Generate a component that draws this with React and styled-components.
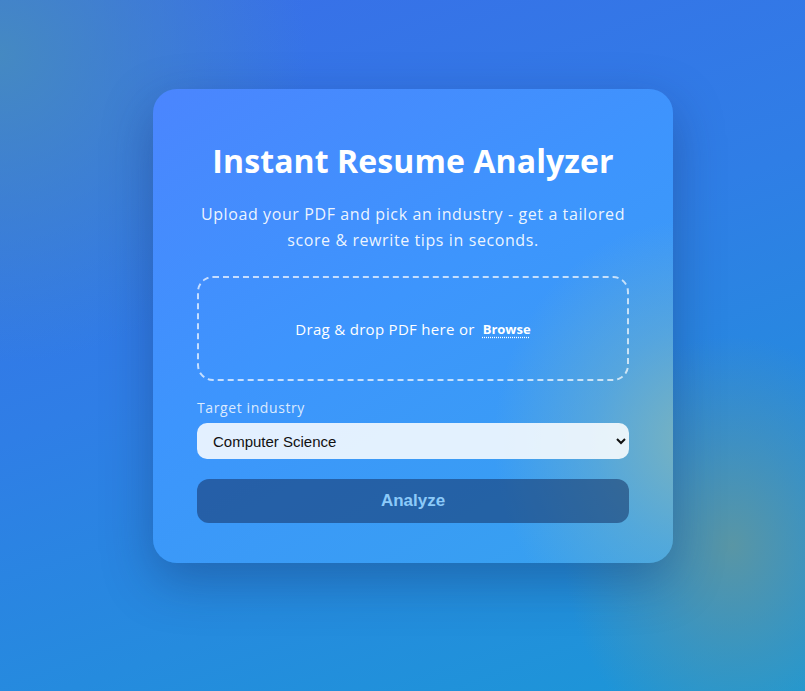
import React from "react";
import styled, { createGlobalStyle } from "styled-components";

const Global = createGlobalStyle`
  html, body { margin: 0; padding: 0; height: 100%; }
  body {
    font-family: "Open Sans", "Liberation Sans", sans-serif;
    background:
      radial-gradient(ellipse 170px 210px at 91% 79%, rgba(92, 150, 162, 0.95) 0%, rgba(92, 150, 162, 0.45) 50%, rgba(92, 150, 162, 0) 100%),
      radial-gradient(circle at 0% 8%, rgba(70, 140, 190, 0.9) 0%, rgba(70, 140, 190, 0) 30%),
      linear-gradient(160deg, #3a6de8 0%, #2f7ee6 45%, #1b98d6 100%);
    min-height: 691px;
  }
  #root { min-height: 691px; }
`;

const Page = styled.main`
  display: flex;
  justify-content: center;
  padding: 89px 0 0 21px;
  box-sizing: border-box;
`;

const Card = styled.section`
  width: 520px;
  box-sizing: border-box;
  padding: 54px 44px 40px;
  border-radius: 24px;
  background:
    radial-gradient(ellipse 200px 220px at 104% 74%, rgba(125, 180, 188, 0.95) 0%, rgba(125, 180, 188, 0.4) 50%, rgba(125, 180, 188, 0) 100%),
    linear-gradient(150deg, #4b85fe 0%, #3d95fd 45%, #36a2ee 100%);
  box-shadow: 0 18px 50px rgba(20, 40, 90, 0.35);
  color: #fff;
  display: flex;
  flex-direction: column;
`;

const Title = styled.h1`
  margin: 0;
  font-size: 32px;
  line-height: 36px;
  font-weight: 700;
  text-align: center;
  letter-spacing: 0.1px;
`;

const Subtitle = styled.p`
  margin: 22px 0 0;
  font-size: 16px;
  line-height: 26px;
  text-align: center;
  letter-spacing: 0.6px;
  color: rgba(255, 255, 255, 0.92);
`;

const DropZone = styled.div`
  margin-top: 23px;
  height: 105px;
  box-sizing: border-box;
  border: 2px dashed rgba(255, 255, 255, 0.7);
  border-radius: 16px;
  display: flex;
  align-items: center;
  justify-content: center;
  font-size: 15px;
  letter-spacing: 0.3px;
  color: #fff;
`;

const Browse = styled.span`
  margin-left: 8px;
  font-size: 13px;
  font-weight: 700;
  letter-spacing: 0;
  text-decoration: underline dotted;
  text-underline-offset: 3px;
`;

const Label = styled.label`
  margin-top: 17px;
  font-size: 14px;
  line-height: 20px;
  letter-spacing: 0.6px;
  color: rgba(255, 255, 255, 0.82);
`;

const Select = styled.select`
  margin-top: 5px;
  height: 36px;
  width: 100%;
  border: none;
  border-radius: 10px;
  padding: 0 10px 0 12px;
  font-family: "Liberation Sans", Arial, sans-serif;
  font-size: 15px;
  color: #111;
  background: rgba(255, 255, 255, 0.86);
`;

const Button = styled.button`
  margin-top: 20px;
  height: 44px;
  width: 100%;
  border: none;
  border-radius: 12px;
  background: rgba(20, 50, 100, 0.55);
  color: #8ccaf9;
  font-family: "Liberation Sans", Arial, sans-serif;
  font-weight: 700;
  font-size: 17px;
`;

export default function App() {
  return (
    <>
      <Global />
      <Page>
        <Card>
          <Title>Instant Resume Analyzer</Title>
          <Subtitle>
            Upload your PDF and pick an industry - get a tailored
            <br />
            score &amp; rewrite tips in seconds.
          </Subtitle>
          <DropZone>
            Drag &amp; drop PDF here or <Browse>Browse</Browse>
          </DropZone>
          <Label htmlFor="industry">Target industry</Label>
          <Select id="industry" defaultValue="cs">
            <option value="cs">Computer Science</option>
            <option value="fin">Finance</option>
            <option value="hc">Healthcare</option>
          </Select>
          <Button disabled>Analyze</Button>
        </Card>
      </Page>
    </>
  );
}
